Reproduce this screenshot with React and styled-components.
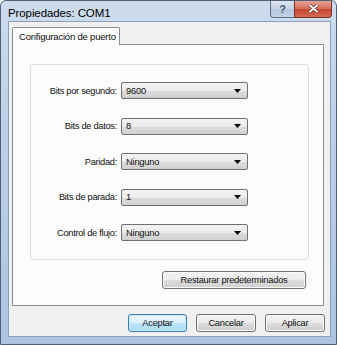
import React from 'react'
import styled, { createGlobalStyle } from 'styled-components'

const Global = createGlobalStyle`
  html, body { margin: 0; padding: 0; background: #ffffff; }
  body { font-family: 'Liberation Sans', Arial, sans-serif; }
`

const fields = [
    { label: 'Bits por segundo:', value: '9600' },
    { label: 'Bits de datos:', value: '8' },
    { label: 'Paridad:', value: 'Ninguno' },
    { label: 'Bits de parada:', value: '1' },
    { label: 'Control de flujo:', value: 'Ninguno' },
]

const Arrow = () => (
    <svg width="7" height="4" viewBox="0 0 7 4">
        <path d="M0 0 H7 L3.5 4 Z" fill="#000" />
    </svg>
)

const App = () => {
    return (
        <>
            <Global />
            <Window>
                <TitleBar>
                    <Title>Propiedades: COM1</Title>
                    <Caption>
                        <HelpBtn>?</HelpBtn>
                        <CloseBtn>
                            <svg width="11" height="9" viewBox="0 0 11 9">
                                <path d="M1.5 1 L9.5 8 M9.5 1 L1.5 8" stroke="#5a2a25" strokeWidth="3.2" />
                                <path d="M1.5 1 L9.5 8 M9.5 1 L1.5 8" stroke="#fff" strokeWidth="1.8" />
                            </svg>
                        </CloseBtn>
                    </Caption>
                </TitleBar>
                <Client>
                    <Tabs>
                        <Tab>Configuración de puerto</Tab>
                    </Tabs>
                    <Panel>
                        <Group>
                            {fields.map((f) => (
                                <Row key={f.label}>
                                    <Label>{f.label}</Label>
                                    <Combo>
                                        <span>{f.value}</span>
                                        <Arrow />
                                    </Combo>
                                </Row>
                            ))}
                        </Group>
                        <RestoreRow>
                            <Button $w={144}>Restaurar predeterminados</Button>
                        </RestoreRow>
                    </Panel>
                    <Footer>
                        <Button $w={59} $primary>Aceptar</Button>
                        <Button $w={60}>Cancelar</Button>
                        <Button $w={60}>Aplicar</Button>
                    </Footer>
                </Client>
            </Window>
        </>
    )
}

const Window = styled.div`
    width:337px;
    height:345px;
    box-sizing:border-box;
    border:1px solid #4f5f75;
    border-radius:6px 6px 0 0;
    background:linear-gradient(180deg, #cddced 0%, #bccfe7 40%, #aec4e1 100%);
    display:flex;
    flex-direction:column;
    overflow:hidden;
`

const TitleBar = styled.div`
    height:23px;
    display:flex;
    justify-content:space-between;
    align-items:flex-start;
    padding-left:7px;
    padding-right:4px;
`

const Title = styled.div`
    font-size:11.5px;
    color:#000;
    padding-top:6px;
    letter-spacing:-0.1px;
`

const Caption = styled.div`
    display:flex;
    margin-top:-1px;
`

const CapBtn = styled.div`
    height:18px;
    box-sizing:border-box;
    display:flex;
    align-items:center;
    justify-content:center;
    border:1px solid #5d6e86;
    border-top:none;
`

const HelpBtn = styled(CapBtn)`
    width:24px;
    border-radius:0 0 0 4px;
    border-right:none;
    background:linear-gradient(180deg, #dfe7f1 0%, #c7d4e5 50%, #b4c5dc 51%, #c3d2e6 100%);
    color:#4c5c72;
    font-size:11px;
    font-weight:bold;
`

const CloseBtn = styled(CapBtn)`
    width:38px;
    border-radius:0 0 4px 0;
    border-color:#7a3128;
    background:linear-gradient(180deg, #e8a99d 0%, #d7705f 50%, #c4432f 51%, #d56a52 100%);
`

const Client = styled.div`
    flex:1;
    margin:0 5px 7px 7px;
    box-sizing:border-box;
    border:1px solid #8d9fb8;
    background:#f0f0f0;
    padding:5px 5px 3px 3px;
    display:flex;
    flex-direction:column;
`

const Tabs = styled.div`
    display:flex;
    height:17px;
    position:relative;
    z-index:1;
`

const Tab = styled.div`
    width:108px;
    box-sizing:border-box;
    border:1px solid #898c95;
    border-bottom:none;
    border-radius:2px 2px 0 0;
    background:#fcfcfc;
    font-size:9.5px;
    letter-spacing:-0.2px;
    padding:3px 0 0 6px;
    color:#111;
    white-space:nowrap;
    height:18px;
`

const Panel = styled.div`
    width:312px;
    height:262px;
    box-sizing:border-box;
    border:1px solid #898c95;
    background:#fcfcfc;
    padding:19px 0 0 17px;
`

const Group = styled.div`
    width:279px;
    height:196px;
    box-sizing:border-box;
    border:1px solid #d5dfe5;
    border-radius:3px;
    padding-top:17px;
    display:flex;
    flex-direction:column;
    gap:18.5px;
`

const Row = styled.div`
    display:grid;
    grid-template-columns:86px 127px;
    column-gap:4px;
    align-items:center;
    height:17px;
`

const Label = styled.div`
    text-align:right;
    font-size:9.3px;
    letter-spacing:-0.3px;
    color:#111;
    white-space:nowrap;
`

const Combo = styled.div`
    height:17px;
    box-sizing:border-box;
    border:1px solid #707070;
    border-radius:2px;
    background:linear-gradient(180deg, #f3f3f3 0%, #ebebeb 50%, #dddddd 51%, #d0d0d0 100%);
    display:flex;
    align-items:center;
    justify-content:space-between;
    padding:0 6px 0 4px;
    font-size:9.3px;
    letter-spacing:-0.2px;
    color:#111;
`

const RestoreRow = styled.div`
    display:flex;
    justify-content:flex-end;
    width:276px;
    margin-top:11px;
`

const Button = styled.div`
    width:${(p) => p.$w}px;
    height:18px;
    box-sizing:border-box;
    border:1px solid ${(p) => (p.$primary ? '#3c7fb1' : '#707070')};
    border-radius:3px;
    background:${(p) =>
        p.$primary
            ? 'linear-gradient(180deg, #eaf6fd 0%, #d9f0fc 50%, #bee6fd 51%, #a7d9f5 100%)'
            : 'linear-gradient(180deg, #f2f2f2 0%, #ebebeb 50%, #dddddd 51%, #cfcfcf 100%)'};
    box-shadow:inset 0 0 0 1px ${(p) => (p.$primary ? '#c6e9fc' : '#fbfbfb')};
    display:flex;
    align-items:center;
    justify-content:center;
    font-size:9.3px;
    letter-spacing:-0.25px;
    color:#111;
    white-space:nowrap;
`

const Footer = styled.div`
    display:flex;
    justify-content:flex-end;
    gap:9px;
    margin-top:8px;
    height:19px;
`

export default App
